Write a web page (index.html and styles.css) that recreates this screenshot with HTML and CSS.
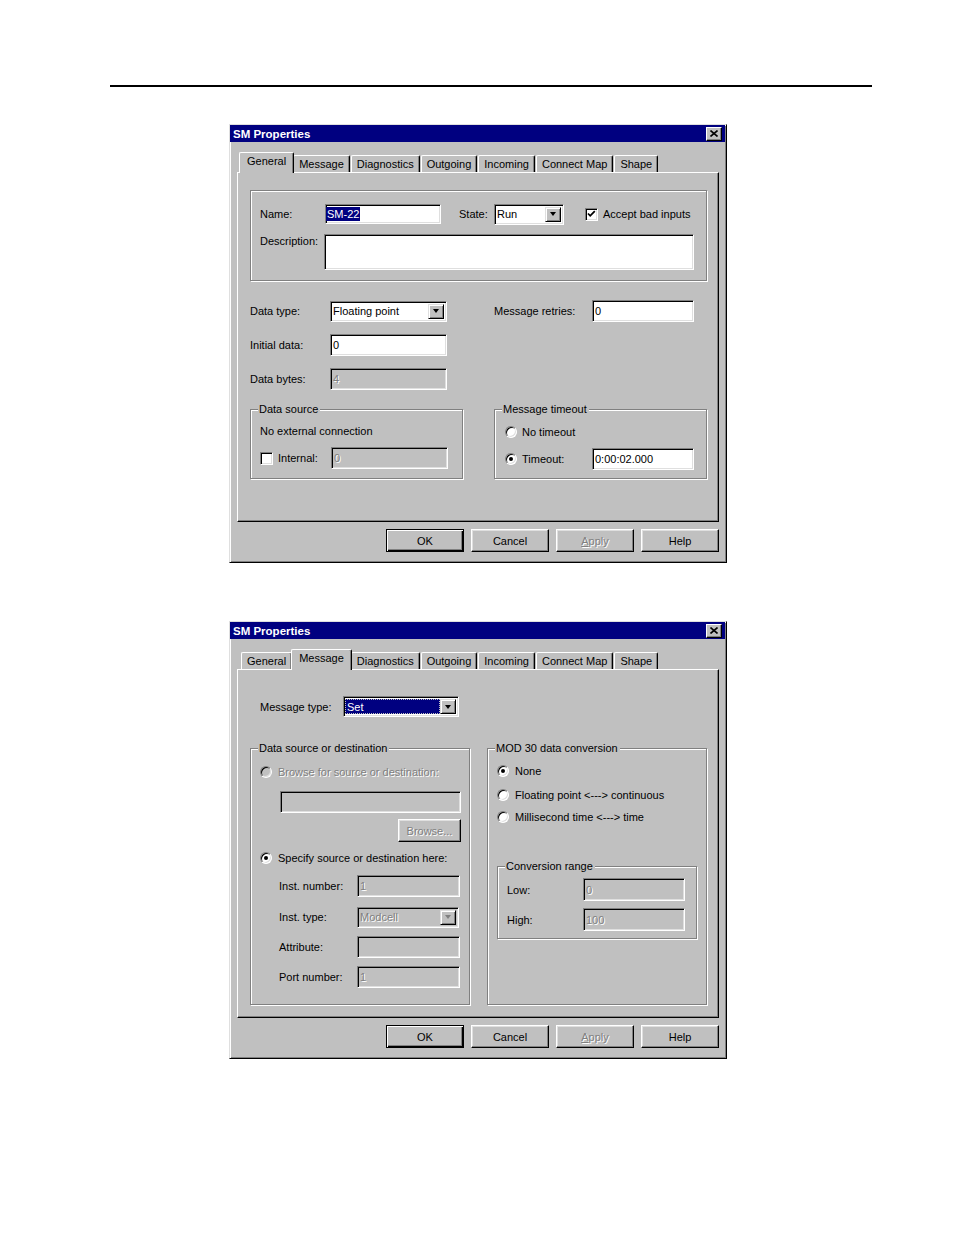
FILE: index.html
```html
<!DOCTYPE html>
<html>
<head>
<meta charset="utf-8">
<title>SM Properties</title>
<link rel="stylesheet" href="styles.css">
</head>
<body>
<div class="rule"></div>

<!-- Dialog 1: General tab -->
<div class="dialog d1">
  <div class="titlebar">
    <span class="title">SM Properties</span>
    <span class="close"><svg width="8" height="7" viewBox="0 0 8 7"><path d="M0.5 0.5 L7.5 6.5 M7.5 0.5 L0.5 6.5" stroke="#000" stroke-width="1.6" fill="none"/></svg></span>
  </div>
  <div class="tabs">
    <div class="tab sel">General</div>
    <div class="tab">Message</div>
    <div class="tab">Diagnostics</div>
    <div class="tab">Outgoing</div>
    <div class="tab">Incoming</div>
    <div class="tab">Connect Map</div>
    <div class="tab">Shape</div>
  </div>
  <div class="panel p1">
    <div class="group g-top">
      <div class="row r-name">
        <span class="lbl w-name">Name:</span>
        <span class="field f-name"><span class="hl">SM-22</span></span>
        <span class="lbl w-state">State:</span>
        <span class="field select f-state"><span class="val">Run</span><span class="arrow"><i></i></span></span>
        <span class="check on"><svg width="13" height="13" viewBox="0 0 13 13"><path d="M3 5.5 L5.2 7.8 L9.8 3.2" stroke="#000" stroke-width="1.8" fill="none"/></svg></span>
        <span class="lbl ml5">Accept bad inputs</span>
      </div>
      <div class="row r-desc">
        <span class="lbl w-desc">Description:</span>
        <span class="field f-desc"></span>
      </div>
    </div>

    <div class="grid-data">
      <span class="lbl">Data type:</span>
      <span class="field select f-dt"><span class="val">Floating point</span><span class="arrow"><i></i></span></span>
      <span></span>
      <span class="lbl">Message retries:</span>
      <span class="field">0</span>

      <span class="lbl">Initial data:</span>
      <span class="field">0</span>
      <span></span><span></span><span></span>

      <span class="lbl">Data bytes:</span>
      <span class="field dis">4</span>
      <span></span><span></span><span></span>
    </div>

    <div class="group-row gr1">
      <div class="group g-src">
        <span class="gtitle">Data source</span>
        <div class="row r-noext">No external connection</div>
        <div class="row r-int">
          <span class="check"></span>
          <span class="lbl w-int">Internal:</span>
          <span class="field dis f-int">0</span>
        </div>
      </div>
      <div class="group g-tmo">
        <span class="gtitle">Message timeout</span>
        <div class="row r-not">
          <span class="radio"></span>
          <span class="lbl ml5">No timeout</span>
        </div>
        <div class="row r-tmo">
          <span class="radio on"><i></i></span>
          <span class="lbl ml5 w-tmo">Timeout:</span>
          <span class="field f-tmo">0:00:02.000</span>
        </div>
      </div>
    </div>
  </div>
  <div class="buttons">
    <span class="btn def">OK</span>
    <span class="btn">Cancel</span>
    <span class="btn disabled"><u>A</u>pply</span>
    <span class="btn">Help</span>
  </div>
</div>

<!-- Dialog 2: Message tab -->
<div class="dialog d2">
  <div class="titlebar">
    <span class="title">SM Properties</span>
    <span class="close"><svg width="8" height="7" viewBox="0 0 8 7"><path d="M0.5 0.5 L7.5 6.5 M7.5 0.5 L0.5 6.5" stroke="#000" stroke-width="1.6" fill="none"/></svg></span>
  </div>
  <div class="tabs">
    <div class="tab">General</div>
    <div class="tab sel">Message</div>
    <div class="tab">Diagnostics</div>
    <div class="tab">Outgoing</div>
    <div class="tab">Incoming</div>
    <div class="tab">Connect Map</div>
    <div class="tab">Shape</div>
  </div>
  <div class="panel p2">
    <div class="row r-mtype">
      <span class="lbl w-mtype">Message type:</span>
      <span class="field select f-mtype"><span class="val selall">Set</span><span class="arrow"><i></i></span></span>
    </div>

    <div class="group-row gr2">
      <div class="group g-dsd">
        <span class="gtitle">Data source or destination</span>
        <div class="row r-browse-radio">
          <span class="radio dis"></span>
          <span class="lbl ml6 distext">Browse for source or destination:</span>
        </div>
        <div class="field dis f-browse"></div>
        <span class="btn disabled b-browse">Browse...</span>
        <div class="row r-spec">
          <span class="radio on"><i></i></span>
          <span class="lbl ml6">Specify source or destination here:</span>
        </div>
        <div class="row r-inst r-in">
          <span class="lbl w-inst">Inst. number:</span>
          <span class="field dis f-inst">1</span>
        </div>
        <div class="row r-inst r-it">
          <span class="lbl w-inst">Inst. type:</span>
          <span class="field select dis f-inst"><span class="val">Modcell</span><span class="arrow dis"><i></i></span></span>
        </div>
        <div class="row r-inst r-at">
          <span class="lbl w-inst">Attribute:</span>
          <span class="field dis f-inst"></span>
        </div>
        <div class="row r-inst r-pn">
          <span class="lbl w-inst">Port number:</span>
          <span class="field dis f-inst">1</span>
        </div>
      </div>

      <div class="group g-mod">
        <span class="gtitle">MOD 30 data conversion</span>
        <div class="row r-c1">
          <span class="radio on"><i></i></span>
          <span class="lbl ml6">None</span>
        </div>
        <div class="row r-c2">
          <span class="radio"></span>
          <span class="lbl ml6">Floating point &lt;---&gt; continuous</span>
        </div>
        <div class="row r-c3">
          <span class="radio"></span>
          <span class="lbl ml6">Millisecond time &lt;---&gt; time</span>
        </div>
        <div class="group g-range">
          <span class="gtitle">Conversion range</span>
          <div class="row r-low">
            <span class="lbl w-range">Low:</span>
            <span class="field dis f-range">0</span>
          </div>
          <div class="row r-high">
            <span class="lbl w-range">High:</span>
            <span class="field dis f-range">100</span>
          </div>
        </div>
      </div>
    </div>
  </div>
  <div class="buttons">
    <span class="btn def">OK</span>
    <span class="btn">Cancel</span>
    <span class="btn disabled"><u>A</u>pply</span>
    <span class="btn">Help</span>
  </div>
</div>
</body>
</html>
```

FILE: styles.css
```css
* { box-sizing: border-box; }

body {
  margin: 0;
  background: #fff;
  font-family: "Liberation Sans", Arial, sans-serif;
  font-size: 11px;
  color: #000;
  width: 954px;
  height: 1235px;
  overflow: hidden;
}

.rule {
  margin: 85px 0 0 110px;
  width: 762px;
  height: 2px;
  background: #000;
}

/* ---------- dialog frame ---------- */
.dialog {
  width: 498px;
  height: 439px;
  margin-left: 229px;
  background: #c0c0c0;
  border: 1px solid;
  border-color: #dfdfdf #000 #000 #dfdfdf;
  box-shadow: inset 1px 1px #fff, inset -1px -1px #808080;
  display: flex;
  flex-direction: column;
}
.d1 { margin-top: 37px; }
.d2 { margin-top: 58px; height: 438px; }

.titlebar {
  height: 17px;
  margin: 0 1px 0 0;
  background: #000080;
  display: flex;
  align-items: center;
  padding: 0 3px 0 3px;
}
.title {
  color: #fff;
  font-weight: bold;
  font-size: 11.5px;
  flex: 1;
}
.close {
  width: 16px;
  height: 14px;
  background: #c0c0c0;
  border: 1px solid;
  border-color: #fff #000 #000 #fff;
  box-shadow: inset -1px -1px #808080;
  display: flex;
  align-items: center;
  justify-content: center;
  padding-right: 1px;
}
.close svg { display: block; }

/* ---------- tabs ---------- */
.tabs {
  margin-top: 10px;
  height: 20px;
  padding-left: 11px;
  display: flex;
  align-items: flex-end;
  gap: 1px;
}
.tab {
  height: 17px;
  padding: 1px 5px 0 5px;
  line-height: 14px;
  border: 1px solid;
  border-bottom: 0;
  border-color: #fff #000 #000 #fff;
  border-radius: 2px 2px 0 0;
  box-shadow: inset -1px 0 #808080;
  white-space: nowrap;
}
.tab.sel {
  height: 21px;
  margin: 0 -2px -1px;
  padding: 1px 7px 0 7px;
  background: #c0c0c0;
  position: relative;
  z-index: 1;
}

.panel {
  margin: 0 7px;
  height: 350px;
  border: 1px solid;
  border-color: #fff #000 #000 #fff;
  box-shadow: inset -1px -1px #808080;
}
.p2 { height: 349px; }

/* ---------- generic controls ---------- */
.row { display: flex; align-items: center; }
.lbl { white-space: nowrap; }
.ml5 { margin-left: 5px; }
.ml6 { margin-left: 6px; }

.field {
  display: flex;
  align-items: center;
  height: 22px;
  padding: 0 2px;
  background: #fff;
  border: 1px solid;
  border-color: #808080 #fff #fff #808080;
  box-shadow: inset 1px 1px #000, inset -1px -1px #dfdfdf;
  white-space: nowrap;
  overflow: hidden;
}
.field.dis {
  background: #c0c0c0;
  color: #808080;
  text-shadow: 1px 1px #fff;
}
.field.select { padding-right: 0; }
.field .val { flex: 1; }
.hl { background: #000080; color: #fff; padding: 1px 1px; margin-left: -1px; }
.val.selall {
  align-self: stretch;
  margin: 2px 0 2px -1px;
  background: #000080;
  color: #fff;
  display: flex;
  align-items: center;
  padding-left: 2px;
  outline: 1px dotted #c0c0c0;
  outline-offset: -1px;
}

.arrow {
  width: 16px;
  align-self: stretch;
  margin: 2px 2px 2px 0;
  background: #c0c0c0;
  border: 1px solid;
  border-color: #dfdfdf #000 #000 #dfdfdf;
  box-shadow: inset 1px 1px #fff, inset -1px -1px #808080;
  display: flex;
  align-items: center;
  justify-content: center;
  flex: none;
}
.arrow i {
  display: block;
  width: 1px;
  height: 0;
  border-top: 4px solid #000;
  border-left: 3px solid transparent;
  border-right: 3px solid transparent;
}
.arrow.dis i { border-top-color: #808080; }

.check {
  width: 13px;
  height: 13px;
  flex: none;
  background: #fff;
  border: 1px solid;
  border-color: #808080 #fff #fff #808080;
  box-shadow: inset 1px 1px #000, inset -1px -1px #dfdfdf;
}
.check svg { display: block; margin: -1px; }

.radio {
  width: 12px;
  height: 12px;
  flex: none;
  border-radius: 50%;
  background: #fff;
  border: 1px solid;
  border-color: #808080 #fff #fff #808080;
  box-shadow: inset 1px 1px #000, inset -1px -1px #dfdfdf;
  display: flex;
  align-items: center;
  justify-content: center;
}
.radio.dis { background: #c0c0c0; }
.radio i {
  display: block;
  width: 4px;
  height: 4px;
  border-radius: 50%;
  background: #000;
}
.distext { color: #808080; text-shadow: 1px 1px #fff; }

.group {
  border: 1px solid #808080;
  box-shadow: inset 1px 1px #fff, 1px 1px #fff;
}
.gtitle {
  display: block;
  width: max-content;
  height: 13px;
  line-height: 13px;
  margin: -7px 0 0 7px;
  padding: 0 2px 0 1px;
  background: #c0c0c0;
}

.buttons {
  margin: 7px 7px 0 0;
  display: flex;
  justify-content: flex-end;
  gap: 7px;
}
.btn {
  width: 78px;
  height: 23px;
  display: flex;
  align-items: center;
  justify-content: center;
  background: #c0c0c0;
  border: 1px solid;
  border-color: #fff #000 #000 #fff;
  box-shadow: inset -1px -1px #808080, inset 1px 1px #dfdfdf;
}
.btn.def {
  border: 1px solid #000;
  box-shadow: inset 1px 1px #fff, inset -1px -1px #000, inset -2px -2px #808080;
}
.btn.disabled { color: #808080; text-shadow: 1px 1px #fff; }
.btn u { text-decoration: underline; }

/* ---------- dialog 1 panel ---------- */
.g-top {
  margin: 17px 11px 0 12px;
  height: 91px;
  padding-left: 9px;
}
.r-name { margin-top: 13px; height: 20px; }
.w-name { width: 65px; }
.f-name { width: 116px; height: 20px; padding-left: 1px; }
.w-state { width: 35px; margin-left: 18px; }
.f-state { width: 70px; height: 21px; }
.r-name .check { margin-left: 21px; }
.r-desc { margin-top: 10px; align-items: flex-start; }
.w-desc { width: 64px; padding-top: 1px; }
.f-desc { width: 370px; height: 36px; }

.grid-data {
  margin: 19px 0 0 12px;
  display: grid;
  grid-template-columns: 80px 117px 47px 98px 102px;
  grid-auto-rows: 22px;
  row-gap: 12px;
  align-items: center;
}
.f-dt { height: 21px; }

.group-row { display: flex; }
.gr1 { margin: 19px 0 0 12px; gap: 31px; }
.g-src, .g-tmo { width: 213px; height: 70px; }
.g-src > .row { margin-left: 9px; }
.g-tmo > .row { margin-left: 10px; }
.r-noext { margin-top: 8px; height: 14px; }
.r-int { margin-top: 9px; height: 22px; }
.w-int { width: 53px; margin-left: 5px; }
.f-int { width: 117px; }
.r-not { margin-top: 9px; height: 14px; }
.r-tmo { margin-top: 9px; height: 22px; }
.w-tmo { width: 70px; }
.f-tmo { width: 102px; }

/* ---------- dialog 2 panel ---------- */
.r-mtype { margin: 26px 0 0 22px; height: 21px; }
.w-mtype { width: 83px; }
.f-mtype { width: 116px; height: 21px; }

.gr2 { margin: 31px 0 0 12px; gap: 17px; }
.g-dsd, .g-mod { width: 220px; height: 257px; }

.r-browse-radio { margin: 10px 0 0 9px; height: 14px; }
.f-browse { margin: 12px 0 0 29px; width: 181px; }
.b-browse { margin: 6px 0 0 147px; width: 63px; }
.r-spec { margin: 9px 0 0 9px; height: 14px; }
.r-inst { height: 22px; padding-left: 28px; }
.r-in { margin-top: 10px; }
.r-it { margin-top: 9px; }
.r-at { margin-top: 8px; }
.r-pn { margin-top: 8px; }
.w-inst { width: 78px; }
.f-inst { width: 103px; }
.r-it .f-inst { width: 102px; height: 21px; }

.g-mod > .row { margin-left: 9px; }
.r-c1 { margin-top: 9px; height: 14px; }
.r-c2 { margin-top: 10px; height: 14px; }
.r-c3 { margin-top: 8px; height: 14px; }
.g-range { margin: 42px 0 0 9px; width: 200px; height: 73px; }
.g-range > .row { margin-left: 9px; }
.r-low { margin-top: 5px; height: 23px; }
.r-high { margin-top: 7px; height: 23px; }
.w-range { width: 76px; }
.f-range { width: 102px; height: 23px; }
```
